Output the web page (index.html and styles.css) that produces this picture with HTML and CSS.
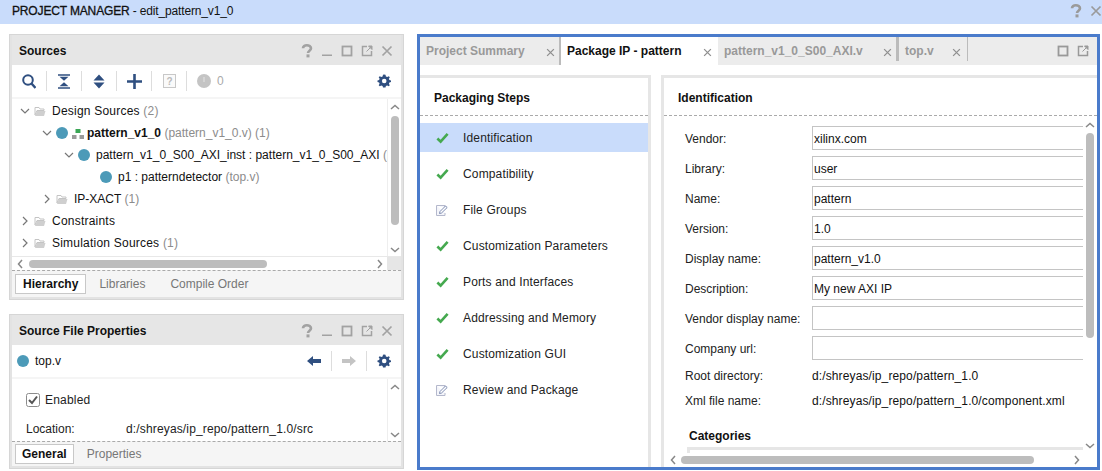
FILE: index.html
```html
<!DOCTYPE html>
<html lang="en">
<head>
    <meta charset="UTF-8">
    <title>PROJECT MANAGER - edit_pattern_v1_0</title>
    <link rel="stylesheet" href="styles.css">
</head>
<body>
    <svg class="defs" width="0" height="0">
        <symbol id="i-help" viewBox="0 0 12 14"><path d="M2 4.200C2 2.300 3.600 1.300 5.800 1.300 8.200 1.300 10 2.400 10 4.300 10 6.600 7 6.700 7 9" fill="none" stroke="currentColor" stroke-width="2.600"/><rect x="5.500" y="10.400" width="3" height="3" fill="currentColor"/></symbol>
        <symbol id="i-min" viewBox="0 0 12 12"><rect x="1" y="9.500" width="10" height="1.500" fill="currentColor"/></symbol>
        <symbol id="i-max" viewBox="0 0 12 12"><rect x="1.500" y="1.500" width="9" height="9" fill="none" stroke="currentColor" stroke-width="1.800"/></symbol>
        <symbol id="i-float" viewBox="0 0 12 12"><path d="M6 1.500H1.500V10.500H10.500V6" fill="none" stroke="currentColor" stroke-width="1.500"/><path d="M7.500 1H11V4.500ZM5.500 6.500L9 3" fill="currentColor" stroke="currentColor"/></symbol>
        <symbol id="i-close" viewBox="0 0 12 12"><path d="M1.500 1.500L10.500 10.500M10.500 1.500L1.500 10.500" fill="none" stroke="currentColor" stroke-width="1.700"/></symbol>
        <symbol id="i-down" viewBox="0 0 10 10"><path d="M1 3L5 7L9 3" fill="none" stroke="#777" stroke-width="1.200"/></symbol>
        <symbol id="i-right" viewBox="0 0 10 10"><path d="M3 1L7 5L3 9" fill="none" stroke="#777" stroke-width="1.200"/></symbol>
        <symbol id="i-folder" viewBox="0 0 12 11"><path d="M1 1.500H5L6 3H10V4.500H3L1 9Z" fill="none" stroke="#c4c4c4"/><path d="M3 5H11.500L10 10H1Z" fill="#cfcfcf"/></symbol>
        <symbol id="i-gear" viewBox="0 0 14 14"><path d="M7 0.500L8.500 0.800 8.900 2.500 10.300 3.100 11.800 2.200 12.800 3.300 11.900 4.800 12.400 6.100 14 6.500V8L12.400 8.400 11.900 9.700 12.800 11.200 11.700 12.300 10.200 11.400 8.900 11.900 8.500 13.500H6L5.600 11.900 4.300 11.400 2.800 12.300 1.700 11.200 2.600 9.700 2.100 8.400 0.500 8V6.500L2.100 6.100 2.600 4.800 1.700 3.300 2.800 2.200 4.300 3.100 5.600 2.500 6 0.800Z" fill="#2f4f80"/><circle cx="7.200" cy="7" r="2.300" fill="#fff"/></symbol>
        <symbol id="i-check" viewBox="0 0 14 12"><path d="M1.500 6.500L5 10L12.500 1.500" fill="none" stroke="#45a94f" stroke-width="2.800"/></symbol>
        <symbol id="i-edit" viewBox="0 0 12 12"><path d="M0.500 1.500H9V4M9 9V11.500H0.500V1.500" fill="#f4f5fa" stroke="#b4b8cc"/><path d="M3.500 9.500L4 7.500 9.500 2 11.200 3.500 5.500 9Z" fill="#fff" stroke="#6f7fa8" stroke-width="0.900"/></symbol>
    </svg>

    <header class="title-bar">
        <div class="title-text"><span class="title-strong">PROJECT MANAGER</span> - edit_pattern_v1_0</div>
        <div class="title-btns">
            <svg class="ic-help-big"><use href="#i-help"/></svg>
            <svg class="ic-close-big"><use href="#i-close"/></svg>
        </div>
    </header>

    <div class="workspace">
        <div class="left-col">
            <section class="panel sources">
                <div class="panel-head">
                    <span class="panel-title">Sources</span>
                    <div class="panel-btns">
                        <svg class="pb pb-help"><use href="#i-help"/></svg>
                        <svg class="pb"><use href="#i-min"/></svg>
                        <svg class="pb"><use href="#i-max"/></svg>
                        <svg class="pb"><use href="#i-float"/></svg>
                        <svg class="pb"><use href="#i-close"/></svg>
                    </div>
                </div>
                <div class="toolbar">
                    <span class="tool">
                        <svg width="14" height="15" viewBox="0 0 14 15"><circle cx="6" cy="6" r="4.800" fill="none" stroke="#2f4f80" stroke-width="2"/><path d="M9.500 9.500L13.500 14" stroke="#2f4f80" stroke-width="2.400"/></svg>
                    </span>
                    <span class="tool-sep"></span>
                    <span class="tool">
                        <svg width="12" height="15" viewBox="0 0 12 15"><path d="M0 1H12M0 14H12" stroke="#2f4f80" stroke-width="1.400"/><path d="M1.500 2.800H10.500L6 6.800ZM1.500 12.200H10.500L6 8.200Z" fill="#2f4f80"/></svg>
                    </span>
                    <span class="tool-sep"></span>
                    <span class="tool">
                        <svg width="12" height="15" viewBox="0 0 12 15"><path d="M6 0.500L11.500 6.500H0.500ZM6 14.500L0.500 8.500H11.500Z" fill="#2f4f80"/></svg>
                    </span>
                    <span class="tool-sep"></span>
                    <span class="tool">
                        <svg width="15" height="15" viewBox="0 0 15 15"><path d="M7.500 0V15M0 7.500H15" stroke="#2f4f80" stroke-width="2.600"/></svg>
                    </span>
                    <span class="tool-sep"></span>
                    <span class="tool">
                        <svg width="13" height="14" viewBox="0 0 13 14"><rect x="0.500" y="0.500" width="12" height="13" fill="#fafafa" stroke="#c8c8c8"/><text x="6.500" y="11" class="box-q">?</text></svg>
                    </span>
                    <span class="tool-sep"></span>
                    <span class="tool tool-count">
                        <svg width="14" height="14" viewBox="0 0 14 14"><circle cx="7" cy="7" r="7" fill="#c4c4c4"/><rect x="6.200" y="3" width="1.600" height="5" fill="#d8d8d8"/></svg>
                        <span class="count">0</span>
                    </span>
                    <span class="tool-gear"><svg width="14" height="14"><use href="#i-gear"/></svg></span>
                </div>
                <div class="scroll-area tree-area">
                    <div class="tree">
                        <div class="tree-row lvl-0"><svg class="chev"><use href="#i-down"/></svg><svg class="folder"><use href="#i-folder"/></svg><span>Design Sources <em>(2)</em></span></div>
                        <div class="tree-row lvl-1"><svg class="chev"><use href="#i-down"/></svg><span class="dot"></span><svg class="hier" width="12" height="10" viewBox="0 0 12 10"><rect x="3.500" y="0" width="5" height="4" fill="#3aa655"/><rect x="0" y="6" width="4.500" height="4" fill="#9a9a9a"/><rect x="7.500" y="6" width="4.500" height="4" fill="#9a9a9a"/></svg><span><b>pattern_v1_0</b> <em>(pattern_v1_0.v) (1)</em></span></div>
                        <div class="tree-row lvl-2"><svg class="chev"><use href="#i-down"/></svg><span class="dot"></span><span>pattern_v1_0_S00_AXI_inst : pattern_v1_0_S00_AXI <em>(pattern_v1_0_S00_AXI.v)</em></span></div>
                        <div class="tree-row lvl-3"><span class="dot"></span><span>p1 : patterndetector <em>(top.v)</em></span></div>
                        <div class="tree-row lvl-1"><svg class="chev"><use href="#i-right"/></svg><svg class="folder"><use href="#i-folder"/></svg><span>IP-XACT <em>(1)</em></span></div>
                        <div class="tree-row lvl-0"><svg class="chev"><use href="#i-right"/></svg><svg class="folder"><use href="#i-folder"/></svg><span>Constraints</span></div>
                        <div class="tree-row lvl-0"><svg class="chev"><use href="#i-right"/></svg><svg class="folder"><use href="#i-folder"/></svg><span>Simulation Sources <em>(1)</em></span></div>
                    </div>
                    <div class="vscroll">
                        <svg class="arrow" viewBox="0 0 10 6"><path d="M1 5L5 1.500L9 5" fill="none" stroke="#888" stroke-width="1.500"/></svg>
                        <div class="track"><div class="thumb thumb-sources"></div></div>
                        <svg class="arrow" viewBox="0 0 10 6"><path d="M1 1L5 4.500L9 1" fill="none" stroke="#888" stroke-width="1.500"/></svg>
                    </div>
                </div>
                <div class="hscroll hscroll-sources">
                    <svg class="arrow-h" viewBox="0 0 6 10"><path d="M5 1L1.500 5L5 9" fill="none" stroke="#888" stroke-width="1.500"/></svg>
                    <div class="track-h"><div class="thumb-h thumb-h-sources"></div></div>
                    <svg class="arrow-h" viewBox="0 0 6 10"><path d="M1 1L4.500 5L1 9" fill="none" stroke="#888" stroke-width="1.500"/></svg>
                    <span class="corner"></span>
                </div>
                <div class="bottom-tabs">
                    <span class="btab active">Hierarchy</span>
                    <span class="btab">Libraries</span>
                    <span class="btab">Compile Order</span>
                </div>
            </section>

            <section class="panel props">
                <div class="panel-head">
                    <span class="panel-title">Source File Properties</span>
                    <div class="panel-btns">
                        <svg class="pb pb-help"><use href="#i-help"/></svg>
                        <svg class="pb"><use href="#i-min"/></svg>
                        <svg class="pb"><use href="#i-max"/></svg>
                        <svg class="pb"><use href="#i-float"/></svg>
                        <svg class="pb"><use href="#i-close"/></svg>
                    </div>
                </div>
                <div class="toolbar props-bar">
                    <span class="dot"></span>
                    <span class="file-name">top.v</span>
                    <span class="nav-btns">
                        <svg width="14" height="10" viewBox="0 0 14 10"><path d="M0 5L6 0V3H14V7H6V10Z" fill="#2f4f80"/></svg>
                        <span class="tool-sep"></span>
                        <svg width="14" height="10" viewBox="0 0 14 10"><path d="M14 5L8 0V3H0V7H8V10Z" fill="#c4c4c4"/></svg>
                        <span class="tool-sep"></span>
                        <svg width="14" height="14"><use href="#i-gear"/></svg>
                    </span>
                </div>
                <div class="scroll-area props-area">
                    <div class="props-body">
                        <div class="enabled-row">
                            <svg width="14" height="14" viewBox="0 0 14 14"><rect x="0.500" y="0.500" width="13" height="13" rx="2" fill="#fff" stroke="#8c8c8c"/><path d="M3 7L6 10L11 3.500" fill="none" stroke="#555" stroke-width="2"/></svg>
                            <span>Enabled</span>
                        </div>
                        <div class="location-row"><span class="loc-label">Location:</span><span class="loc-value">d:/shreyas/ip_repo/pattern_1.0/src</span></div>
                    </div>
                    <div class="vscroll">
                        <svg class="arrow" viewBox="0 0 10 6"><path d="M1 5L5 1.500L9 5" fill="none" stroke="#888" stroke-width="1.500"/></svg>
                        <div class="track"></div>
                        <svg class="arrow" viewBox="0 0 10 6"><path d="M1 1L5 4.500L9 1" fill="none" stroke="#888" stroke-width="1.500"/></svg>
                    </div>
                </div>
                <div class="bottom-tabs">
                    <span class="btab active">General</span>
                    <span class="btab">Properties</span>
                </div>
            </section>
        </div>

        <section class="editor">
            <div class="tab-strip">
                <div class="tab tab-summary"><span>Project Summary</span><svg class="tab-x"><use href="#i-close"/></svg></div>
                <div class="tab tab-active"><span>Package IP - pattern</span><svg class="tab-x"><use href="#i-close"/></svg></div>
                <div class="tab tab-axi"><span>pattern_v1_0_S00_AXI.v</span><svg class="tab-x"><use href="#i-close"/></svg></div>
                <div class="tab tab-top"><span>top.v</span><svg class="tab-x"><use href="#i-close"/></svg></div>
                <div class="strip-btns">
                    <svg class="pb"><use href="#i-max"/></svg>
                    <svg class="pb"><use href="#i-float"/></svg>
                </div>
            </div>
            <div class="editor-body">
                <div class="steps">
                    <div class="sub-head">Packaging Steps</div>
                    <ul class="step-list">
                        <li class="step selected"><svg class="step-ic"><use href="#i-check"/></svg>Identification</li>
                        <li class="step"><svg class="step-ic"><use href="#i-check"/></svg>Compatibility</li>
                        <li class="step"><svg class="step-ic edit"><use href="#i-edit"/></svg>File Groups</li>
                        <li class="step"><svg class="step-ic"><use href="#i-check"/></svg>Customization Parameters</li>
                        <li class="step"><svg class="step-ic"><use href="#i-check"/></svg>Ports and Interfaces</li>
                        <li class="step"><svg class="step-ic"><use href="#i-check"/></svg>Addressing and Memory</li>
                        <li class="step"><svg class="step-ic"><use href="#i-check"/></svg>Customization GUI</li>
                        <li class="step"><svg class="step-ic edit"><use href="#i-edit"/></svg>Review and Package</li>
                    </ul>
                </div>
                <div class="ident">
                    <div class="sub-head">Identification</div>
                    <div class="ident-main">
                        <div class="ident-form">
                            <div class="field"><label>Vendor:</label><span class="input">xilinx.com</span></div>
                            <div class="field"><label>Library:</label><span class="input">user</span></div>
                            <div class="field"><label>Name:</label><span class="input">pattern</span></div>
                            <div class="field"><label>Version:</label><span class="input">1.0</span></div>
                            <div class="field"><label>Display name:</label><span class="input">pattern_v1.0</span></div>
                            <div class="field"><label>Description:</label><span class="input">My new AXI IP</span></div>
                            <div class="field"><label>Vendor display name:</label><span class="input"></span></div>
                            <div class="field"><label>Company url:</label><span class="input"></span></div>
                            <div class="info"><label>Root directory:</label><span>d:/shreyas/ip_repo/pattern_1.0</span></div>
                            <div class="info"><label>Xml file name:</label><span>d:/shreyas/ip_repo/pattern_1.0/component.xml</span></div>
                            <div class="categories">Categories</div>
                            <div class="cat-box"></div>
                        </div>
                        <div class="vscroll vscroll-ident">
                            <svg class="arrow" viewBox="0 0 10 6"><path d="M1 5L5 1.500L9 5" fill="none" stroke="#888" stroke-width="1.500"/></svg>
                            <div class="track"><div class="thumb thumb-ident"></div></div>
                            <svg class="arrow" viewBox="0 0 10 6"><path d="M1 1L5 4.500L9 1" fill="none" stroke="#888" stroke-width="1.500"/></svg>
                        </div>
                    </div>
                    <div class="hscroll hscroll-ident">
                        <svg class="arrow-h" viewBox="0 0 6 10"><path d="M5 1L1.500 5L5 9" fill="none" stroke="#888" stroke-width="1.500"/></svg>
                        <div class="track-h"><div class="thumb-h thumb-h-ident"></div></div>
                        <svg class="arrow-h" viewBox="0 0 6 10"><path d="M1 1L4.500 5L1 9" fill="none" stroke="#888" stroke-width="1.500"/></svg>
                        <span class="corner-white"></span>
                    </div>
                </div>
            </div>
        </section>
    </div>
</body>
</html>
```

FILE: styles.css
```css
* {
    box-sizing: border-box;
}

html, body {
    margin: 0;
    padding: 0;
    width: 1102px;
    height: 471px;
    overflow: hidden;
    background-color: #fff;
    font-family: "Liberation Sans", Arial, sans-serif;
    font-size: 12px;
    color: #111;
}

.defs {
    display: block;
    height: 0;
}

svg {
    flex: none;
    display: block;
}

/* title bar */
.title-bar {
    height: 24px;
    background-color: #c9dcfb;
    display: flex;
    align-items: center;
    justify-content: space-between;
    padding: 0 0 2px 12px;
}

.title-text {
    letter-spacing: -0.15px;
}

.title-strong {
    -webkit-text-stroke: 0.3px #111;
}

.title-btns {
    display: flex;
    align-items: center;
    gap: 8px;
    color: #9a9a9a;
}

.ic-help-big {
    width: 12px;
    height: 14px;
}

.ic-close-big {
    width: 12px;
    height: 12px;
}

.workspace {
    display: flex;
    padding: 10px 2px 1px 9px;
    gap: 13px;
    height: 447px;
}

/* left column */
.left-col {
    width: 395px;
    display: flex;
    flex-direction: column;
    gap: 14px;
    flex: none;
}

.panel {
    border: 3px solid #e3e3e3;
    border-top-width: 1px;
    outline: 1px solid #d6d6d6;
    outline-offset: -1px;
    display: flex;
    flex-direction: column;
    background-color: #f5f5f5;
}

.sources {
    height: 266px;
}

.props {
    height: 155px;
}

.panel-head {
    height: 30px;
    background-color: #e6e6e6;
    display: flex;
    align-items: center;
    justify-content: space-between;
    padding: 1px 8px 0 7px;
    flex: none;
}

.panel-title {
    font-weight: bold;
}

.panel-btns {
    display: flex;
    align-items: center;
    gap: 8px;
    color: #a2a2a2;
}

.pb {
    width: 12px;
    height: 12px;
}

.pb-help {
    height: 14px;
}

.toolbar {
    height: 32px;
    background-color: #fff;
    display: flex;
    align-items: center;
    padding-left: 10px;
    flex: none;
    margin-bottom: 2px;
}

.tool {
    width: 14px;
    display: flex;
    justify-content: center;
}

.tool-sep {
    width: 1px;
    height: 20px;
    background-color: #ddd;
    margin: 0 10px;
    flex: none;
}

.tool-count {
    display: flex;
    align-items: center;
    gap: 6px;
    width: auto;
}

.count {
    color: #aaa;
}

.box-q {
    font-size: 10px;
    font-weight: bold;
    fill: #bbb;
    text-anchor: middle;
}

.tool-gear {
    margin-left: auto;
    margin-right: 10px;
}

.scroll-area {
    display: flex;
    background-color: #fff;
    overflow: hidden;
    flex: none;
}

.tree-area {
    height: 157px;
}

.tree {
    flex: 1;
    min-width: 0;
    overflow: hidden;
    padding-top: 1px;
}

.tree-row {
    height: 22px;
    display: flex;
    align-items: center;
    white-space: nowrap;
}

.tree-row em {
    font-style: normal;
    color: #8c8c8c;
}

.lvl-0 { padding-left: 8px; letter-spacing: 0.22px; }
.lvl-1 { padding-left: 30px; }
.lvl-2 { padding-left: 52px; }
.lvl-3 { padding-left: 88px; }

.chev {
    width: 10px;
    height: 10px;
    margin-right: 4px;
}

.folder {
    width: 12px;
    height: 11px;
    margin-right: 6px;
}

.dot {
    width: 12px;
    height: 12px;
    border-radius: 50%;
    background-color: #4c9ab8;
    flex: none;
    margin-right: 6px;
}

.hier {
    margin: 0 3px -1px -2px;
}

.vscroll {
    width: 14px;
    background-color: #fff;
    border-left: 1px solid #eee;
    display: flex;
    flex-direction: column;
    align-items: center;
    flex: none;
    padding: 5px 0 3px;
}

.arrow {
    width: 10px;
    height: 6px;
}

.track {
    flex: 1;
    width: 8px;
    padding-top: 4px;
}

.thumb {
    width: 8px;
    background-color: #bdbdbd;
    border-radius: 4px;
}

.thumb-sources {
    height: 109px;
    margin-top: 2px;
}

.thumb-ident {
    height: 205px;
    margin-top: 1px;
}

.hscroll {
    height: 14px;
    display: flex;
    align-items: center;
    background-color: #fff;
    flex: none;
    padding-left: 5px;
}

.hscroll-sources {
    border-top: 1px solid #e8e8e8;
}

.arrow-h {
    width: 6px;
    height: 10px;
}

.track-h {
    flex: 1;
    height: 8px;
    padding: 0 6px;
}

.thumb-h {
    height: 8px;
    background-color: #bdbdbd;
    border-radius: 4px;
}

.thumb-h-sources {
    width: 238px;
}

.thumb-h-ident {
    width: 353px;
}

.corner {
    width: 14px;
    align-self: stretch;
    background-color: #e6e6e6;
    margin-left: 4px;
    flex: none;
}

.corner-white {
    width: 13px;
    height: 13px;
    margin-left: 4px;
    flex: none;
}

.bottom-tabs {
    flex: 1;
    border-top: 1px dashed #aaa;
    display: flex;
    align-items: center;
    padding-left: 3px;
    color: #777;
    background-color: #f5f5f5;
}

.btab {
    padding: 0 11px 0 12px;
    height: 20px;
    line-height: 19px;
    border: 1px solid transparent;
}

.btab.active {
    background-color: #fff;
    border-color: #c8c8c8;
    color: #111;
    font-weight: bold;
    padding: 0 7px;
}

.props .btab.active {
    padding: 0 6px;
}

/* properties panel */
.props-bar {
    padding: 0 10px 0 5px;
}

.props-bar .dot {
    margin-right: 6px;
}

.nav-btns {
    margin-left: auto;
    display: flex;
    align-items: center;
}

.props-area {
    height: 62px;
}

.props-body {
    flex: 1;
    padding: 13px 0 0 14px;
    color: #222;
}

.enabled-row {
    display: flex;
    align-items: center;
    gap: 5px;
    height: 16px;
    letter-spacing: 0.2px;
}

.location-row {
    display: flex;
    margin-top: 14px;
}

.loc-label {
    width: 100px;
}

.loc-value {
    letter-spacing: 0.15px;
}

/* editor */
.editor {
    width: 683px;
    border: 3px solid #4a7bcb;
    display: flex;
    flex-direction: column;
    flex: none;
    overflow: hidden;
}

.tab-strip {
    height: 28px;
    background-color: #ececec;
    display: flex;
    flex: none;
    font-weight: bold;
    color: #999;
}

.tab {
    display: flex;
    align-items: center;
    justify-content: space-between;
}

.tab-x {
    width: 9px;
    height: 9px;
    color: #8f8f8f;
    margin-top: 2px;
}

.tab-summary {
    width: 141px;
    padding: 0 4px 0 6px;
    border-right: 2px solid #bbb;
}

.tab-active {
    width: 157px;
    padding: 0 6px;
    background-color: #fff;
    color: #111;
}

.tab-axi {
    width: 181px;
    height: 24px;
    padding: 4px 4px 0 6px;
    border-right: 3px solid #bbb;
}

.tab-top {
    width: 69px;
    height: 24px;
    padding: 4px 6px 0 6px;
    border-right: 1px solid #bbb;
}

.strip-btns {
    margin-left: auto;
    display: flex;
    align-items: center;
    gap: 8px;
    padding-right: 8px;
    color: #999;
}

.editor-body {
    flex: 1;
    min-height: 0;
    display: flex;
    gap: 10px;
    padding-top: 10px;
    background-color: #fff;
    overflow: hidden;
}

.steps {
    width: 231px;
    border-top: 3px solid #e6e6e6;
    border-right: 3px solid #e6e6e6;
    flex: none;
}

.sub-head {
    height: 38px;
    padding: 2px 14px 0;
    display: flex;
    align-items: center;
    font-weight: bold;
    border-bottom: 1px dashed #aaa;
}

.step-list {
    list-style: none;
    margin: 0;
    padding: 7px 0 0;
}

.step {
    height: 29px;
    margin-bottom: 7px;
    display: flex;
    align-items: center;
    padding-left: 16px;
    color: #222;
    letter-spacing: 0.15px;
}

.step.selected {
    background-color: #c9dcfb;
}

.step-ic {
    width: 13px;
    height: 12px;
    margin-right: 14px;
}

.step-ic.edit {
    width: 12px;
    height: 12px;
    margin-right: 15px;
}

.ident {
    flex: 1;
    min-width: 0;
    border-top: 3px solid #e6e6e6;
    border-left: 3px solid #e6e6e6;
    display: flex;
    flex-direction: column;
    height: 100%;
    overflow: hidden;
}

.ident .sub-head {
    flex: none;
}

.ident-main {
    flex: 1;
    min-height: 0;
    display: flex;
    overflow: hidden;
}

.ident-form {
    flex: 1;
    min-width: 0;
    padding: 7px 0 0 21px;
    overflow: hidden;
}

.field {
    height: 30px;
    display: flex;
    align-items: center;
}

.field label,
.info label {
    width: 127px;
    flex: none;
    color: #222;
}

.field label {
    padding-top: 2px;
}

.input {
    flex: 1;
    height: 24px;
    border: 1px solid #c4c4c4;
    border-right: 0;
    padding: 0 1px;
    line-height: 24px;
    color: #111;
}

.info {
    display: flex;
    height: 25px;
    align-items: center;
}

.info span {
    letter-spacing: 0.12px;
}

.categories {
    font-weight: bold;
    margin: 16px 0 0 4px;
}

.cat-box {
    margin: 4px 0 0 2px;
    height: 10px;
    border: 3px solid #e6e6e6;
    border-right: 0;
}

.vscroll-ident {
    width: 14px;
    border-left: 0;
    padding: 6px 0 4px;
}

.hscroll-ident {
    padding-left: 6px;
}

.hscroll-ident .track-h {
    padding: 0 5px;
}
```
